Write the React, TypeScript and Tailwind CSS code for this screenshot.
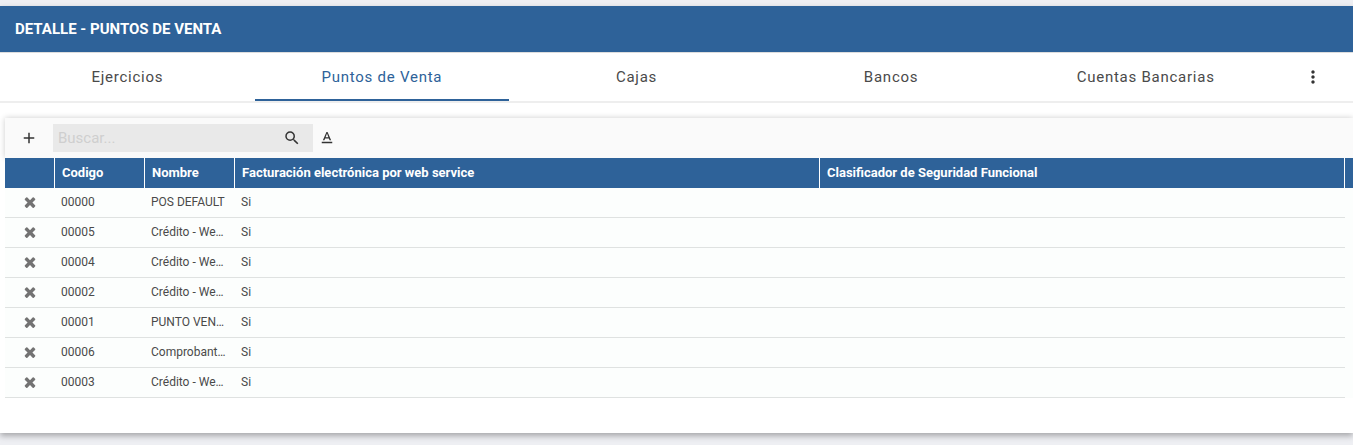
import { MdAdd, MdMoreVert, MdSearch, MdTextFormat } from "react-icons/md";

const tabs = ["Ejercicios", "Puntos de Venta", "Cajas", "Bancos", "Cuentas Bancarias"];
const activeTab = "Puntos de Venta";

const columns = ["Codigo", "Nombre", "Facturación electrónica por web service", "Clasificador de Seguridad Funcional"];

const rows = [
  { code: "00000", name: "POS DEFAULT" },
  { code: "00005", name: "Crédito - We…" },
  { code: "00004", name: "Crédito - We…" },
  { code: "00002", name: "Crédito - We…" },
  { code: "00001", name: "PUNTO VEN…" },
  { code: "00006", name: "Comprobant…" },
  { code: "00003", name: "Crédito - We…" },
];

function RemoveIcon() {
  return (
    <svg viewBox="0 0 1792 1792" className="w-4 h-4" fill="currentColor">
      <path d="M1490 1322q0 40-28 68l-136 136q-28 28-68 28t-68-28l-294-294-294 294q-28 28-68 28t-68-28l-136-136q-28-28-28-68t28-68l294-294-294-294q-28-28-28-68t28-68l136-136q28-28 68-28t68 28l294 294 294-294q28-28 68-28t68 28l136 136q28 28 28 68t-28 68l-294 294 294 294q28 28 28 68z" />
    </svg>
  );
}

function Tabs() {
  return (
    <nav className="flex h-[50px] border-b-2 border-[#eeeeee]">
      <div role="tablist" className="flex flex-1">
        {tabs.map((tab) => (
          <button
            key={tab}
            role="tab"
            aria-selected={tab === activeTab}
            className={
              tab === activeTab
                ? "flex-1 pt-0.5 border-b-2 border-[#2e6299] text-[#2e6299] text-[15px] tracking-wider"
                : "flex-1 pt-0.5 border-b-2 border-transparent text-[#4a4a4a] text-[15px] tracking-wider"
            }
          >
            {tab}
          </button>
        ))}
      </div>
      <button aria-label="Más" className="w-20 flex items-center justify-center text-[#333333]">
        <MdMoreVert size={20} />
      </button>
    </nav>
  );
}

function Toolbar() {
  return (
    <div className="flex items-center h-10 bg-[#fafafa] text-[#333333] shadow-[0_0_6px_rgba(0,0,0,0.2)]">
      <button aria-label="Agregar" className="w-12 flex justify-center">
        <MdAdd size={18} />
      </button>
      <div className="flex items-center w-[260px] h-7 pl-[5px] pr-3 bg-[#e9e9e9]">
        <input
          type="text"
          aria-label="Buscar"
          placeholder="Buscar..."
          className="flex-1 min-w-0 bg-transparent text-[15px] outline-none placeholder:text-[#cfcfcf]"
        />
        <button aria-label="Iniciar búsqueda">
          <MdSearch size={18} />
        </button>
      </div>
      <button aria-label="Formato de texto" className="ml-[5px]">
        <MdTextFormat size={18} />
      </button>
    </div>
  );
}

function PointsTable() {
  return (
    <table className="relative w-full table-fixed border-separate border-spacing-0 text-left">
      <colgroup>
        <col className="w-[50px]" />
        <col className="w-[90px]" />
        <col className="w-[90px]" />
        <col className="w-[585px]" />
        <col />
        <col className="w-2" />
      </colgroup>
      <thead>
        <tr className="h-[30px] bg-[#2e6299] text-[13px] leading-4 text-white">
          <th className="p-0 border-r border-white" />
          {columns.map((column) => (
            <th key={column} className="py-0 px-[7px] border-r border-white font-bold truncate">
              {column}
            </th>
          ))}
          <th className="p-0" />
        </tr>
      </thead>
      <tbody>
        {rows.map((row) => (
          <tr key={row.code} className="h-[30px] bg-[#fcfefd] text-xs text-[#4a4a4a]">
            <td className="pb-0.5 border-b border-[#dfe2e1]">
              <button aria-label={`Eliminar ${row.code}`} className="flex w-full justify-center text-[#737373]">
                <RemoveIcon />
              </button>
            </td>
            <td className="px-1.5 pb-0.5 border-b border-[#dfe2e1]">{row.code}</td>
            <td className="px-1.5 pb-0.5 border-b border-[#dfe2e1] whitespace-nowrap">{row.name}</td>
            <td className="px-1.5 pb-0.5 border-b border-[#dfe2e1]">Si</td>
            <td className="p-0 border-b border-[#dfe2e1]" />
            <td className="p-0" />
          </tr>
        ))}
      </tbody>
    </table>
  );
}

export default function App() {
  return (
    <div className="min-h-screen overflow-hidden bg-[#eeeff3] pt-1.5 pb-3 font-['Roboto',sans-serif]">
      <main className="bg-white shadow-[0_3px_6px_rgba(0,0,0,0.3)]">
        <header className="flex items-center h-[47px] px-[15px] bg-[#2e6299] border-b border-[#dddddd]">
          <h1 className="text-[15px] font-bold text-white">DETALLE - PUNTOS DE VENTA</h1>
        </header>
        <Tabs />
        <section className="overflow-hidden pt-[15px] pl-[5px] pb-[35px]">
          <Toolbar />
          <PointsTable />
        </section>
      </main>
    </div>
  );
}
